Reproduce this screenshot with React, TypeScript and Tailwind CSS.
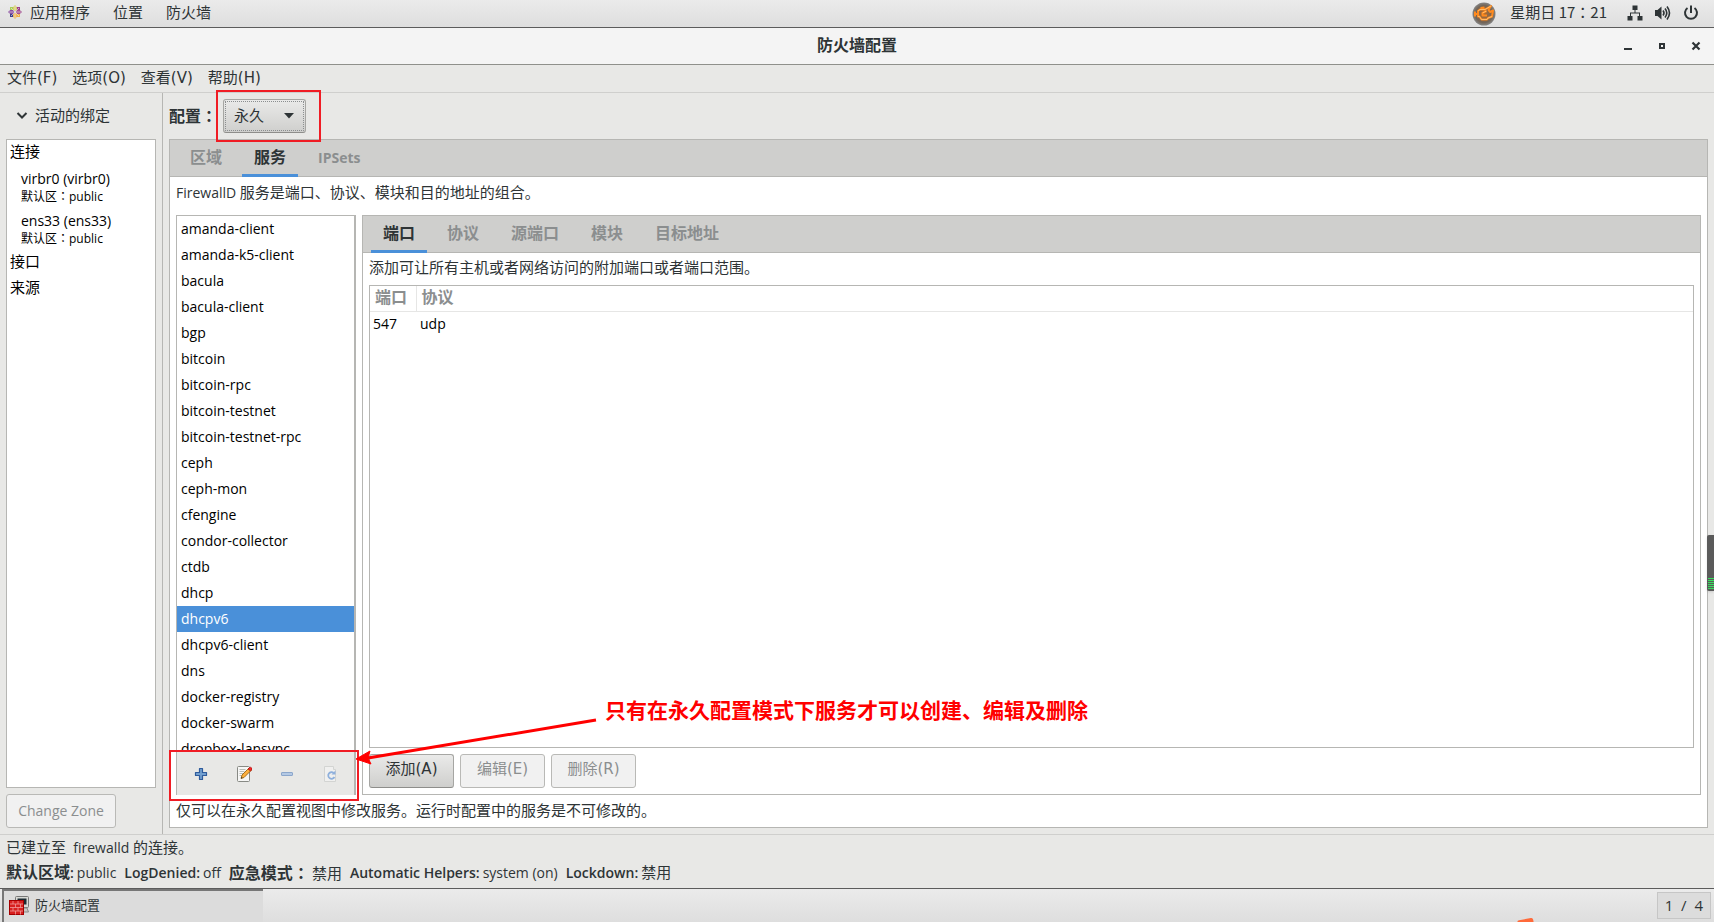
import { Fragment, type ReactNode } from 'react';

const services = [
  'amanda-client',
  'amanda-k5-client',
  'bacula',
  'bacula-client',
  'bgp',
  'bitcoin',
  'bitcoin-rpc',
  'bitcoin-testnet',
  'bitcoin-testnet-rpc',
  'ceph',
  'ceph-mon',
  'cfengine',
  'condor-collector',
  'ctdb',
  'dhcp',
  'dhcpv6',
  'dhcpv6-client',
  'dns',
  'docker-registry',
  'docker-swarm',
  'dropbox-lansync',
];

const bindings = ['virbr0 (virbr0)', 'ens33 (ens33)'];

const menus = ['文件(F)', '选项(O)', '查看(V)', '帮助(H)'];

const status = [
  { label: '默认区域:', value: 'public' },
  { label: 'LogDenied:', value: 'off' },
  { label: '应急模式：', value: '禁用' },
  { label: 'Automatic Helpers:', value: 'system (on)' },
  { label: 'Lockdown:', value: '禁用' },
];

// latin runs are set one step smaller than the chinese around them,
// and the full-width colon sits in the middle of its cell
function Mixed({ children }: { children: string }) {
  const parts = children.split(/([ -~]+|：)/);
  return (
    <>
      {parts.map((part, i) => {
        if (part === '：') {
          return (
            <span key={i} className="font-['Noto_Sans_CJK_JP',sans-serif]">
              {part}
            </span>
          );
        }
        if (i % 2 === 1) {
          return (
            <span key={i} className="text-sm whitespace-pre">
              {part}
            </span>
          );
        }
        return <Fragment key={i}>{part}</Fragment>;
      })}
    </>
  );
}

function CentosIcon() {
  return (
    <svg viewBox="0 0 14 14" className="h-3.5 w-3.5">
      <rect x="2" y="2" width="4.5" height="4.5" fill="#a9cf58" />
      <rect x="7.5" y="2" width="4.5" height="4.5" fill="#9d3f8c" />
      <rect x="2" y="7.5" width="4.5" height="4.5" fill="#3f3f8c" />
      <rect x="7.5" y="7.5" width="4.5" height="4.5" fill="#efb04a" />
      <path d="M7 0l2 2.200v3.300L7 7 5 5.500V2.200z" fill="#d9cf6a" />
      <path d="M14 7l-2.200 2H8.500L7 7l1.500-2h3.300z" fill="#a3508f" />
      <path d="M7 14l-2-2.200V8.500L7 7l2 1.500v3.300z" fill="#efb85a" />
      <path d="M0 7l2.200-2h3.300L7 7 5.500 9H2.200z" fill="#8a4fa0" />
      <path d="M7 1v12M1 7h12M3 3l8 8M11 3l-8 8" stroke="#f0ecf0" strokeWidth=".6" />
    </svg>
  );
}

function EngineIcon() {
  return (
    <svg viewBox="0 0 24 24" className="h-6 w-6" fill="none">
      <defs>
        <radialGradient id="engine" cx=".5" cy=".5" r=".5">
          <stop offset="0" stopColor="#b06a2c" />
          <stop offset=".75" stopColor="#736558" />
          <stop offset="1" stopColor="#858585" />
        </radialGradient>
      </defs>
      <circle cx="12" cy="12" r="11.500" fill="url(#engine)" />
      <path
        d="M3 9.500v5M3 12h2.500M6 9l2-1.500h5l6-3.500-2.500 4 1.500 2 3-1.500-1 6-4 1.500-1 1.500H9.500L7.500 14.500H6zM8.500 6l4-.5M14.500 9l-4 2v2.500h4.500"
        stroke="#ff8a1e"
        strokeWidth="2"
        strokeLinejoin="round"
      />
      <path
        d="M6 9l2-1.500h5l6-3.500M6 14.500h1.500l2 3H15l1-1.500 4-1.500M14.500 9l-4 2"
        stroke="#ffd08a"
        strokeWidth=".7"
      />
    </svg>
  );
}

function NetworkIcon() {
  return (
    <svg viewBox="0 0 16 16" className="h-4 w-4" fill="#2e3436">
      <path d="M5.500 0.500h5v4.500H8.500V7.500H13V11h2.500v4.500h-5V11H12V8.500H4V11h1.500v4.500h-5V11H3V7.500h4.500V5h-2z" />
    </svg>
  );
}

function VolumeIcon() {
  return (
    <svg viewBox="0 0 16 16" className="h-4 w-4" fill="none" stroke="#2e3436">
      <path d="M0 5h2.500L6.500 1.500v13L2.500 11H0z" fill="#2e3436" stroke="none" />
      <path d="M8 5.500q2 2.500 0 5" strokeWidth="1.600" />
      <path d="M10 3.500q3.600 4.500 0 9" strokeWidth="1.600" />
      <path d="M12 1.500q5 6.500 0 13" strokeWidth="1.600" />
    </svg>
  );
}

function PowerIcon() {
  return (
    <svg viewBox="0 0 16 16" className="h-4 w-4" fill="none" stroke="#2e3436" strokeWidth="2">
      <path d="M4.500 3a6 6 0 1 0 7 0" />
      <path d="M8 .5V8" />
    </svg>
  );
}

function PlusIcon() {
  return (
    <svg viewBox="0 0 16 16" className="h-4 w-4">
      <path
        d="M6.500 2.500h3v4h4v3h-4v4h-3v-4h-4v-3h4z"
        fill="#729fcf"
        stroke="#2f5b9c"
        strokeWidth="1.200"
        strokeLinejoin="round"
      />
    </svg>
  );
}

function EditIcon() {
  return (
    <svg viewBox="0 0 16 16" className="h-4 w-4">
      <rect x="1.500" y=".5" width="12" height="15" rx="1" fill="#f6f6f5" stroke="#888a85" />
      <path d="M3.500 3.500h6M3.500 5.500h5M3.500 7.500h4M3.500 9.500h2" stroke="#babdb6" />
      <path d="M5 12.500l1-3.500 7-7 2.500 2-7.500 7.500z" fill="#fcaf3e" stroke="#8f5902" strokeWidth=".8" />
      <path d="M12 3l1.500-1.500q1-.7 2 .3t.3 2L14.500 5z" fill="#ef2929" stroke="#a40000" strokeWidth=".6" />
      <path d="M5 12.500l.5-1.800 1.200 1.200z" fill="#2e3436" />
    </svg>
  );
}

function MinusIcon() {
  return (
    <svg viewBox="0 0 16 16" className="h-4 w-4">
      <rect x="2.500" y="6.500" width="11" height="3" rx=".5" fill="#b4c9e4" stroke="#8ba6cb" />
    </svg>
  );
}

function ReloadIcon() {
  return (
    <svg viewBox="0 0 16 16" className="h-4 w-4" fill="none">
      <path d="M2.500 .5h9v3h2v12h-11z" fill="#f0f0ef" stroke="#d3d4d2" />
      <path d="M12.500 11a3.300 3.300 0 1 1-.8-4" stroke="#8fb0dc" strokeWidth="1.800" />
      <path d="M13.500 4.500v4h-4z" fill="#8fb0dc" />
    </svg>
  );
}

function FirewallIcon() {
  return (
    <svg viewBox="0 0 20 20" className="h-5 w-5">
      <rect x="6.500" y=".5" width="13" height="11" rx="1" fill="#d9dad6" stroke="#777" />
      <rect x="8.500" y="2.500" width="9" height="6" fill="#1d2b33" />
      <path d="M13 12h5l1.500 4H13z" fill="#c7c8c4" stroke="#888" />
      <rect x=".5" y="4.500" width="14" height="14" fill="#d8201f" stroke="#a40000" />
      <path
        d="M1 8h13M1 11.500h13M1 15h13M4 5v3M9 5v3M6.500 8v3.500M11.500 8v3.500M4 11.500V15M9 11.500V15M6.500 15v3.500M11.500 15v3.500"
        stroke="#f19a9a"
        strokeWidth=".8"
      />
    </svg>
  );
}

function Tab({ active, children }: { active?: boolean; children: string }) {
  return (
    <button
      type="button"
      role="tab"
      aria-selected={!!active}
      className={
        active
          ? 'border-b-[3px] border-[#4a90d9] px-3 text-base leading-5 font-bold text-[#2e3436]'
          : 'border-b-[3px] border-transparent px-3 text-base leading-5 font-bold text-[#8b8e8f]'
      }
    >
      <Mixed>{children}</Mixed>
    </button>
  );
}

function TabStrip({ children }: { children: ReactNode }) {
  return (
    <div
      role="tablist"
      className="flex h-[37px] shrink-0 gap-2 border-b border-[#b6b6b3] bg-[#cfcfcd] px-2 [&>*]:h-[37px]"
    >
      {children}
    </div>
  );
}

function ActionButton({ disabled, children }: { disabled?: boolean; children: string }) {
  return (
    <button
      type="button"
      disabled={disabled}
      className={
        disabled
          ? "h-[34px] w-[85px] rounded-[3px] border border-[#b9b9b6] bg-[#f1f1f1] pb-1 font-['DejaVu_Sans','Noto_Sans_CJK_SC',sans-serif] text-[#8b8e8f]"
          : "h-[34px] w-[85px] rounded-[3px] border border-[#a6a6a3] border-b-[#8e8e8b] bg-linear-to-b from-[#eaeae9] to-[#cfcfcd] pb-1 font-['DejaVu_Sans','Noto_Sans_CJK_SC',sans-serif]"
      }
    >
      {children}
    </button>
  );
}

function TopBar() {
  return (
    <header className="flex h-7 shrink-0 items-center justify-between border-b border-[#5c5c5c] bg-linear-to-b from-[#ebebeb] to-[#dedede] pr-[15px] pl-2">
      <nav className="flex items-center gap-[23px] pb-1">
        <button type="button" className="flex items-center gap-2">
          <CentosIcon />
          应用程序
        </button>
        <button type="button">位置</button>
        <button type="button">防火墙</button>
      </nav>
      <div className="flex items-center">
        <EngineIcon />
        <span className="ml-[14px] pb-1 font-['Noto_Sans_CJK_JP',sans-serif]">
          <span className="font-['Noto_Sans_CJK_SC',sans-serif]">星期日</span> 17：21
        </span>
        <div className="ml-5 flex items-center gap-3 pb-0.5">
          <NetworkIcon />
          <VolumeIcon />
          <PowerIcon />
        </div>
      </div>
    </header>
  );
}

function TitleBar() {
  return (
    <div className="grid h-[37px] shrink-0 grid-cols-[1fr_auto_1fr] items-center border-b border-[#8f908b] bg-[#f4f4f4]">
      <h1 className="col-start-2 pb-0.5 text-base leading-5 font-bold">防火墙配置</h1>
      <div className="flex justify-end gap-[18px] pr-2.5">
        <button type="button" aria-label="最小化">
          <svg viewBox="0 0 16 16" className="h-4 w-4">
            <path d="M4 10h8v2H4z" fill="#2e3436" />
          </svg>
        </button>
        <button type="button" aria-label="还原">
          <svg viewBox="0 0 16 16" className="h-4 w-4" fill="none">
            <path d="M6 6h4v4H6z" stroke="#2e3436" strokeWidth="2" />
          </svg>
        </button>
        <button type="button" aria-label="关闭">
          <svg viewBox="0 0 16 16" className="h-4 w-4" fill="none">
            <path d="M4.500 4.500l7 7M11.500 4.500l-7 7" stroke="#2e3436" strokeWidth="2.200" />
          </svg>
        </button>
      </div>
    </div>
  );
}

function BindingsPanel() {
  return (
    <aside className="flex w-[163px] shrink-0 flex-col border-r border-[#b6b6b3] px-1.5 pb-1.5">
      <button type="button" className="flex h-[46px] shrink-0 items-center gap-[7px] pb-0.5 pl-2.5">
        <svg viewBox="0 0 12 12" className="h-3 w-3" fill="none">
          <path d="M1.500 4L6 8.500 10.500 4" stroke="#2e3436" strokeWidth="2" />
        </svg>
        活动的绑定
      </button>
      <ul className="min-h-0 flex-1 overflow-hidden border border-[#b6b6b3] bg-white px-[3px] text-black">
        <li>
          <p className="h-[26px] leading-[23px]">连接</p>
          <ul className="pl-[11px]">
            {bindings.map((name) => (
              <li key={name} className="h-[42px] pt-0.5">
                <p className="text-sm leading-[22px]">{name}</p>
                <p className="text-xs leading-3">
                  默认区<span className="font-['Noto_Sans_CJK_JP',sans-serif]">：</span>public
                </p>
              </li>
            ))}
          </ul>
        </li>
        <li className="h-[26px] leading-[23px]">接口</li>
        <li className="h-[26px] leading-[23px]">来源</li>
      </ul>
      <button
        type="button"
        disabled
        className="mt-1.5 h-[34px] w-[110px] shrink-0 rounded-[3px] border border-[#b9b9b6] bg-[#f1f1f1] text-sm text-[#8b8e8f]"
      >
        Change Zone
      </button>
    </aside>
  );
}

function Annotation() {
  return (
    <div className="pointer-events-none absolute -top-[54px] left-full z-10 ml-0.5 flex items-start whitespace-nowrap">
      <svg viewBox="0 0 249 72" className="h-[72px] w-[249px]">
        <path d="M12 60L240 22" stroke="#ff0000" strokeWidth="3" />
        <path d="M0 61L14 53L12 60L15 66z" fill="#ff0000" stroke="#ff0000" />
      </svg>
      <p className="text-[21px] leading-[25px] font-bold text-[#ff0000]">
        只有在永久配置模式下服务才可以创建、编辑及删除
      </p>
    </div>
  );
}

function ServiceList() {
  return (
    <div className="flex w-[180px] shrink-0 flex-col border-t border-r-2 border-l border-[#b6b6b3]">
      <ul className="min-h-0 flex-1 overflow-hidden border-b border-dashed border-[#b6b6b3] text-sm text-black">
        {services.map((name) => (
          <li
            key={name}
            className={
              name === 'dhcpv6'
                ? 'bg-[#4a90d9] px-1 leading-[26px] text-white'
                : 'px-1 leading-[26px]'
            }
          >
            {name}
          </li>
        ))}
      </ul>
      <div className="relative flex h-[43px] shrink-0 items-center justify-around bg-[#e8e8e6] px-0.5">
        <button type="button" aria-label="添加服务">
          <PlusIcon />
        </button>
        <button type="button" aria-label="编辑服务">
          <EditIcon />
        </button>
        <button type="button" aria-label="删除服务" disabled>
          <MinusIcon />
        </button>
        <button type="button" aria-label="载入默认服务" disabled>
          <ReloadIcon />
        </button>
        <div className="pointer-events-none absolute -top-0.5 -right-[5px] -bottom-1.5 -left-2 border-2 border-[#f01c24]" />
        <Annotation />
      </div>
    </div>
  );
}

function PortsPanel() {
  return (
    <div className="flex min-w-0 flex-1 flex-col border border-[#b6b6b3]">
      <TabStrip>
        <Tab active>端口</Tab>
        <Tab>协议</Tab>
        <Tab>源端口</Tab>
        <Tab>模块</Tab>
        <Tab>目标地址</Tab>
      </TabStrip>
      <div className="flex min-h-0 flex-1 flex-col p-1.5 pt-0">
        <p className="h-8 leading-[29px]">添加可让所有主机或者网络访问的附加端口或者端口范围。</p>
        <div className="min-h-0 flex-1 overflow-hidden border border-[#b6b6b3]">
          <table className="w-full text-left text-black">
            <thead>
              <tr className="h-[25px] border-b border-[#e6e6e5] text-base leading-5 text-[#8b8e8f]">
                <th className="w-[46px] border-r border-[#e6e6e5] pb-0.5 pl-[5px] font-bold">端口</th>
                <th className="pb-0.5 pl-[5px] font-bold">协议</th>
              </tr>
            </thead>
            <tbody>
              <tr className="h-[26px] text-sm">
                <td className="pl-[3px]">547</td>
                <td className="pl-1">udp</td>
              </tr>
            </tbody>
          </table>
        </div>
        <div className="mt-1.5 flex shrink-0 gap-1.5">
          <ActionButton>添加(A)</ActionButton>
          <ActionButton disabled>编辑(E)</ActionButton>
          <ActionButton disabled>删除(R)</ActionButton>
        </div>
      </div>
    </div>
  );
}

function ConfigPanel() {
  return (
    <main className="flex min-w-0 flex-1 flex-col px-1.5 pb-1.5">
      <div className="flex h-[46px] shrink-0 items-center gap-1.5">
        <label htmlFor="config" className="pb-0.5 text-base leading-5 font-bold">
          配置<span className="font-['Noto_Sans_CJK_JP',sans-serif]">：</span>
        </label>
        <div className="relative z-10">
          <select
            id="config"
            defaultValue="永久"
            className="block h-[34px] w-[83px] appearance-none rounded-[3px] border border-[#a6a6a3] border-b-[#8e8e8b] bg-linear-to-b from-[#eaeae9] to-[#cfcfcd] pb-0.5 pl-2.5 outline-1 -outline-offset-3 outline-[#8b8e8f] outline-dotted"
          >
            <option>永久</option>
            <option>运行时</option>
          </select>
          <svg viewBox="0 0 10 6" className="pointer-events-none absolute top-3.5 right-3 h-1.5 w-2.5">
            <path d="M0 0h10L5 5.500z" fill="#2e3436" />
          </svg>
          <div className="pointer-events-none absolute -inset-y-[9px] -right-[15px] -left-[7px] border-2 border-[#f01c24]" />
        </div>
      </div>
      <div className="flex min-h-0 flex-1 flex-col border border-[#b6b6b3] bg-white">
        <TabStrip>
          <Tab>区域</Tab>
          <Tab active>服务</Tab>
          <Tab>IPSets</Tab>
        </TabStrip>
        <div className="flex min-h-0 flex-1 flex-col px-1.5">
          <p className="h-[38px] leading-[30px]">
            <Mixed>FirewallD 服务是端口、协议、模块和目的地址的组合。</Mixed>
          </p>
          <div className="flex min-h-0 flex-1 gap-1.5">
            <ServiceList />
            <PortsPanel />
          </div>
          <p className="h-8 leading-[30px]">仅可以在永久配置视图中修改服务。运行时配置中的服务是不可修改的。</p>
        </div>
      </div>
    </main>
  );
}

function StatusBar() {
  return (
    <footer className="h-[55px] shrink-0 border-t border-b border-t-[#cfcfcd] border-b-[#5c5c5c] px-1.5">
      <p className="leading-6">
        <Mixed>已建立至  firewalld 的连接。</Mixed>
      </p>
      <dl className="flex gap-2 leading-[26px]">
        {status.map(({ label, value }) => (
          <div key={label} className="flex items-baseline gap-[3px]">
            <dt className="text-base leading-[26px] font-semibold">
              <Mixed>{label}</Mixed>
            </dt>
            <dd>
              <Mixed>{value}</Mixed>
            </dd>
          </div>
        ))}
      </dl>
    </footer>
  );
}

function TaskBar() {
  return (
    <div className="relative flex h-[33px] shrink-0 items-center justify-between overflow-hidden bg-linear-to-b from-[#ebebeb] to-[#dedede] pr-[3px] pl-0.5">
      <button
        type="button"
        className="flex h-full w-[261px] items-center gap-1.5 border-t-2 border-l-2 border-[#777777] bg-[#dcdcdc] pb-0.5 pl-[5px]"
      >
        <FirewallIcon />
        <span className="pb-0.5 text-[13px]">防火墙配置</span>
      </button>
      <span className="border border-[#c6c6c6] bg-[#dcdcdc] px-[7px] leading-[25px] whitespace-pre">1  /  4</span>
      <div className="absolute right-[180px] -bottom-[9px] h-3 w-4 -rotate-10 rounded-xs bg-[#ff6a3a]" />
    </div>
  );
}

export default function App() {
  return (
    <div className="relative flex h-screen flex-col overflow-hidden bg-[#e8e8e6] font-['Open_Sans','Noto_Sans_CJK_SC',sans-serif] text-[15px] leading-5 text-[#2e3436]">
      <TopBar />
      <TitleBar />
      <nav className="flex h-7 shrink-0 items-center gap-[15px] border-b border-[#cfcfcd] px-[7px] pb-0.5 font-['DejaVu_Sans','Noto_Sans_CJK_SC',sans-serif]">
        {menus.map((menu) => (
          <button key={menu} type="button">
            {menu}
          </button>
        ))}
      </nav>
      <div className="flex min-h-0 flex-1">
        <BindingsPanel />
        <ConfigPanel />
      </div>
      <StatusBar />
      <TaskBar />
      {/* load meter docked on the screen edge */}
      <div className="absolute top-[58%] right-0 z-20 flex h-14 w-[7px] flex-col justify-end gap-px rounded-l-xs bg-[#5a5a5a] pb-0.5 pl-px shadow-sm">
        {[0, 1, 2, 3, 4, 5].map((n) => (
          <div key={n} className="h-px bg-[#35e05c]" />
        ))}
      </div>
    </div>
  );
}
